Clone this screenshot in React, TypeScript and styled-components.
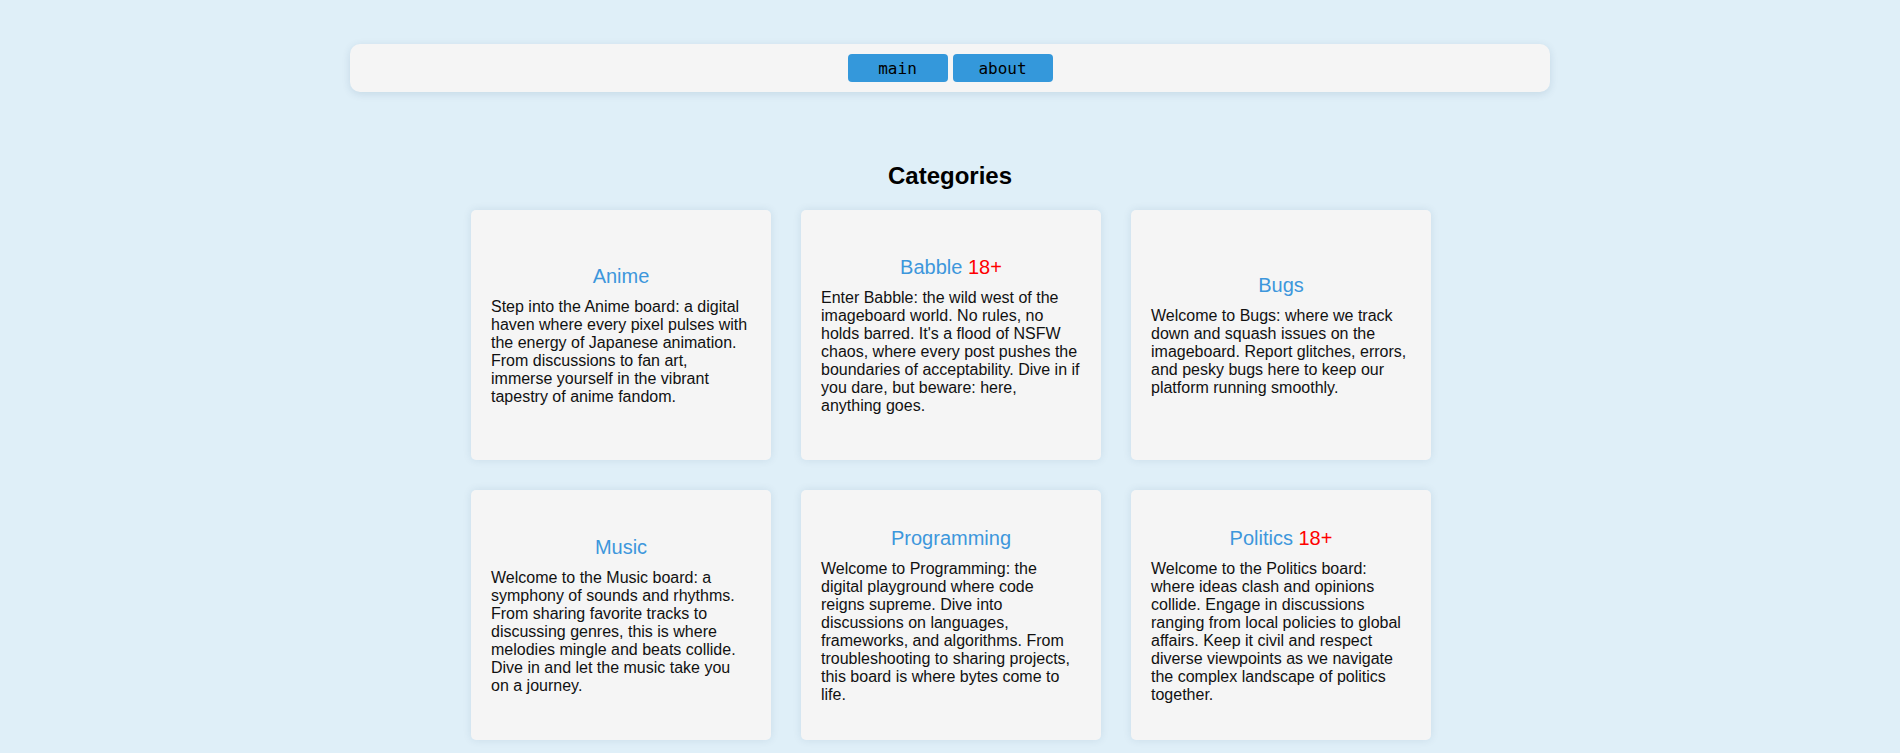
import styled, { createGlobalStyle } from "styled-components";

type Category = {
  name: string;
  adult?: boolean;
  text: string;
};

const categories: Category[] = [
  {
    name: "Anime",
    text: "Step into the Anime board: a digital haven where every pixel pulses with the energy of Japanese animation. From discussions to fan art, immerse yourself in the vibrant tapestry of anime fandom.",
  },
  {
    name: "Babble",
    adult: true,
    text: "Enter Babble: the wild west of the imageboard world. No rules, no holds barred. It's a flood of NSFW chaos, where every post pushes the boundaries of acceptability. Dive in if you dare, but beware: here, anything goes.",
  },
  {
    name: "Bugs",
    text: "Welcome to Bugs: where we track down and squash issues on the imageboard. Report glitches, errors, and pesky bugs here to keep our platform running smoothly.",
  },
  {
    name: "Music",
    text: "Welcome to the Music board: a symphony of sounds and rhythms. From sharing favorite tracks to discussing genres, this is where melodies mingle and beats collide. Dive in and let the music take you on a journey.",
  },
  {
    name: "Programming",
    text: "Welcome to Programming: the digital playground where code reigns supreme. Dive into discussions on languages, frameworks, and algorithms. From troubleshooting to sharing projects, this board is where bytes come to life.",
  },
  {
    name: "Politics",
    adult: true,
    text: "Welcome to the Politics board: where ideas clash and opinions collide. Engage in discussions ranging from local policies to global affairs. Keep it civil and respect diverse viewpoints as we navigate the complex landscape of politics together.",
  },
];

function App() {
  return (
    <>
      <GlobalStyle />
      <Page>
        <NavBar>
          <NavButton>main</NavButton>
          <NavButton>about</NavButton>
        </NavBar>

        <Heading>Categories</Heading>

        <Grid>
          {categories.map((c) => (
            <Card key={c.name}>
              <Title>
                {c.name}
                {c.adult && <Adult> 18+</Adult>}
              </Title>
              <Description>{c.text}</Description>
            </Card>
          ))}
        </Grid>
      </Page>
    </>
  );
}

const GlobalStyle = createGlobalStyle`
  html, body {
    margin: 0;
    padding: 0;
    background-color: #dfeff8;
  }
  body {
    font-family: "Liberation Sans", Arial, sans-serif;
    color: #111;
  }
`;

const Page = styled.div`
  display: flex;
  flex-direction: column;
  align-items: center;
  padding: 44px 0 20px;
`;

const NavBar = styled.nav`
  box-sizing: border-box;
  width: 1200px;
  padding: 10px;
  display: flex;
  justify-content: center;
  gap: 5px;
  background-color: #f5f5f5;
  border-radius: 10px;
  box-shadow: 0 2px 8px rgba(0, 60, 100, 0.12);
`;

const NavButton = styled.button`
  width: 100px;
  height: 28px;
  padding: 0;
  border: none;
  border-radius: 4px;
  background-color: #3498db;
  color: #000;
  font-family: "DejaVu Sans Mono", "Liberation Mono", monospace;
  font-size: 16px;
  cursor: pointer;
`;

const Heading = styled.h2`
  margin: 70px 0 20px;
  font-size: 24px;
  font-weight: bold;
  color: #000;
`;

const Grid = styled.div`
  display: grid;
  grid-template-columns: repeat(3, 300px);
  gap: 30px;
  margin-left: 2px;
`;

const Card = styled.div`
  box-sizing: border-box;
  height: 250px;
  padding: 20px;
  display: flex;
  flex-direction: column;
  justify-content: center;
  background-color: #f5f5f5;
  border-radius: 5px;
  box-shadow: 0 0 8px rgba(0, 60, 100, 0.1);
`;

const Title = styled.h3`
  margin: 0 0 10px;
  font-size: 20px;
  font-weight: normal;
  text-align: center;
  color: #3d97dc;
`;

const Adult = styled.span`
  color: #ff0000;
`;

const Description = styled.p`
  margin: 0;
  font-size: 16px;
  color: #111;
`;

export default App;
